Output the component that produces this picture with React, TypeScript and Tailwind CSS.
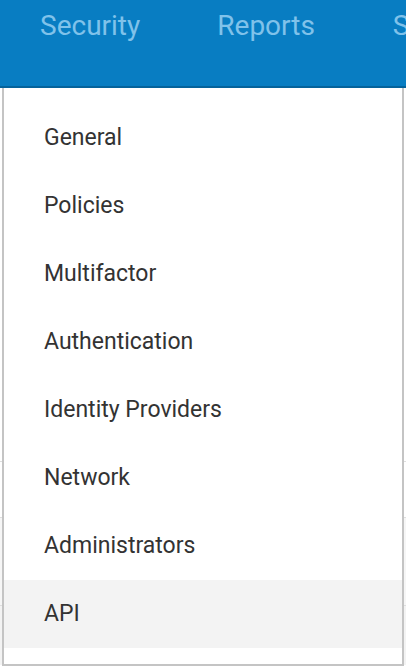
import React from "react";

const items = [
  "General",
  "Policies",
  "Multifactor",
  "Authentication",
  "Identity Providers",
  "Network",
  "Administrators",
  "API",
];

export default function App() {
  return (
    <div className="w-[406px] h-[668px] overflow-hidden bg-white relative" style={{ fontFamily: "Roboto, 'Open Sans', sans-serif" }}>
      <div className="h-[88px] bg-[#087dc2] border-b-2 border-[#05639b] flex items-start text-[28px] leading-[32px] text-[#80c2ea] whitespace-nowrap">
        <span className="ml-[40px] mt-[10px]">Security</span>
        <span className="ml-[77px] mt-[10px]">Reports</span>
        <span className="ml-[78px] mt-[10px]">S</span>
      </div>
      {/* page content behind the menu */}
      <div className="flex flex-col">
        <div className="h-[373px]" />
        <div className="h-[56px] border-t border-[#dedede]" />
        <div className="h-[88px] border-t border-[#dedede] bg-[#f6f6f6]" />
        <div className="h-[60px] border-t border-[#dedede] bg-[#f3f3f3]" />
      </div>
      <div className="absolute left-[2px] top-[88px] w-[402px] border-2 border-t-0 border-[#c4c4c4] bg-white py-[16px]">
        {items.map((it) => (
          <div
            key={it}
            className={`h-[68px] flex items-center pl-[40px] text-[23px] text-[#333333] ${it === "API" ? "bg-[#f3f3f3]" : ""}`}
          >
            {it}
          </div>
        ))}
      </div>
    </div>
  );
}
